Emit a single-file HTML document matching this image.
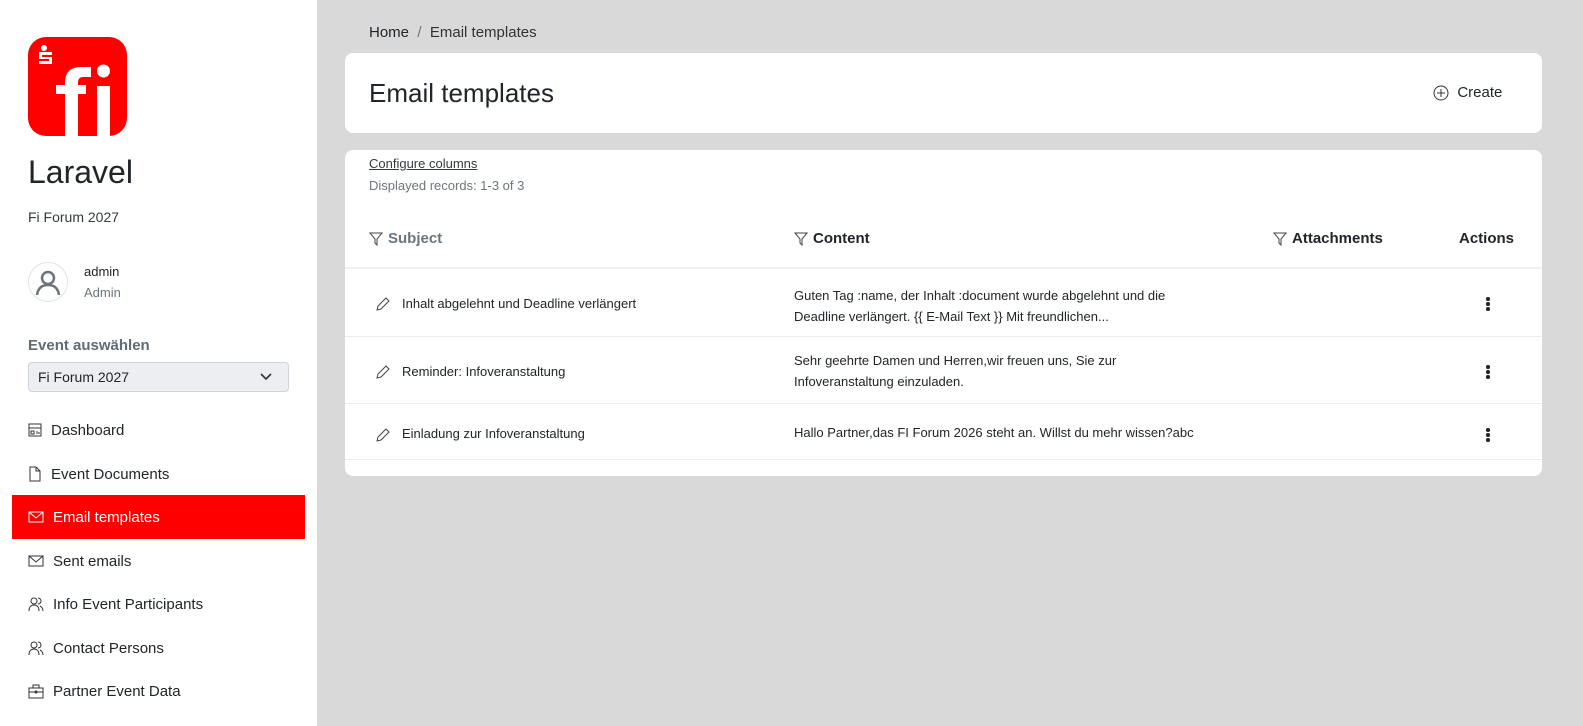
<!DOCTYPE html>
<html><head><meta charset="utf-8"><style>
*{box-sizing:border-box;margin:0;padding:0}
body{width:1583px;height:726px;overflow:hidden;background:#d9d9d9;font-family:"Liberation Sans",sans-serif;color:#212529;position:relative}
.sb{position:absolute;left:0;top:0;width:317px;height:726px;background:#fff}
.abs{position:absolute;white-space:nowrap}
.nav{position:absolute;left:12px;width:293px;height:44px;display:flex;align-items:center;padding-left:16px;font-size:15px;color:#212529}
.nav svg{margin-right:9px}
.nav.act{background:#ff0000;color:#fff}
.card{position:absolute;left:345px;width:1197px;background:#fff;border-radius:8px}
.row{position:absolute;left:0;width:1197px;border-bottom:1px solid #e9ecef;font-size:13px}
.th{position:absolute;top:80px;font-size:15px;font-weight:bold;display:flex;align-items:center;white-space:nowrap}
.th svg{margin-right:5px}
.dots{position:absolute;left:1141px;width:4px}
.dots i{display:block;width:3.5px;height:3.5px;border-radius:50%;background:#212529;margin-bottom:1.5px}
</style></head><body>
<div class="sb">
  <svg class="abs" style="left:28px;top:37px" width="99" height="99" viewBox="0 0 99 99">
    <rect width="99" height="99" rx="18" fill="#ff0000"/>
    <circle cx="16" cy="11" r="3" fill="#fff"/>
    <path d="M11 15h13v3H14v2h10v7H11v-3h10v-2H11z" fill="#fff"/>
    <path d="M37 99V46q0-16 16-16h10v10h-8q-5 0-5 6v53z" fill="#fff"/>
    <rect x="28" y="48" width="30" height="9" fill="#fff"/>
    <rect x="69" y="49" width="13" height="50" fill="#fff"/>
    <circle cx="75.5" cy="34" r="6.5" fill="#fff"/>
  </svg>
  <div class="abs" style="left:28px;top:154px;font-size:32px;font-weight:300;color:#212529">Laravel</div>
  <div class="abs" style="left:28px;top:209px;font-size:14px;color:#343a40">Fi Forum 2027</div>
  <div class="abs" style="left:28px;top:262px;width:40px;height:40px;border:1px solid #dee2e6;border-radius:50%">
    <svg width="38" height="38" viewBox="0 0 38 38"><circle cx="19" cy="15" r="6" fill="none" stroke="#6c757d" stroke-width="2.5"/><path d="M8 32c1-7 5-10 11-10s10 3 11 10" fill="none" stroke="#6c757d" stroke-width="2.5"/></svg>
  </div>
  <div class="abs" style="left:84px;top:264px;font-size:13px">admin</div>
  <div class="abs" style="left:84px;top:285px;font-size:13px;color:#6c757d">Admin</div>
  <div class="abs" style="left:28px;top:337px;font-size:15px;font-weight:bold;color:#5f6b75">Event auswählen</div>
  <div class="abs" style="left:28px;top:362px;width:261px;height:30px;background:#eceef1;border:1px solid #ced4da;border-radius:4px;font-size:14px;padding:6px 9px">Fi Forum 2027
    <svg style="position:absolute;right:16px;top:10px" width="12" height="8" viewBox="0 0 12 8"><path d="M1 1l5 5 5-5" fill="none" stroke="#333" stroke-width="1.6"/></svg></div>
  <div class="nav" style="top:408px"><svg width="14" height="14" viewBox="0 0 14 14" fill="none" stroke="#333"><rect x="1" y="1" width="12" height="12"/><path d="M1 5h12M3 8h3v3H3zM9 8v3M11 9v2"/></svg>Dashboard</div>
  <div class="nav" style="top:452px"><svg width="14" height="16" viewBox="0 0 14 16" fill="none" stroke="#333"><path d="M2 1h6l4 4v10H2z M8 1v4h4"/></svg>Event Documents</div>
  <div class="nav act" style="top:495px"><svg width="16" height="12" viewBox="0 0 16 12" fill="none" stroke="#fff"><rect x="1" y="1" width="14" height="10"/><path d="M1 1l7 6 7-6"/></svg>Email templates</div>
  <div class="nav" style="top:539px"><svg width="16" height="12" viewBox="0 0 16 12" fill="none" stroke="#333"><rect x="1" y="1" width="14" height="10"/><path d="M1 1l7 6 7-6"/></svg>Sent emails</div>
  <div class="nav" style="top:582px"><svg width="16" height="16" viewBox="0 0 16 16" fill="none" stroke="#333"><circle cx="6" cy="5" r="3"/><path d="M1 15c0-4 2-6 5-6s5 2 5 6M10 2a3 3 0 010 6M12 10c2 1 3 3 3 5"/></svg>Info Event Participants</div>
  <div class="nav" style="top:626px"><svg width="16" height="16" viewBox="0 0 16 16" fill="none" stroke="#333"><circle cx="6" cy="5" r="3"/><path d="M1 15c0-4 2-6 5-6s5 2 5 6M10 2a3 3 0 010 6M12 10c2 1 3 3 3 5"/></svg>Contact Persons</div>
  <div class="nav" style="top:669px"><svg width="16" height="15" viewBox="0 0 16 15" fill="none" stroke="#333"><rect x="1" y="4" width="14" height="10"/><path d="M5 4V1h6v3M1 8h14"/><circle cx="8" cy="8" r="1" fill="#333"/></svg>Partner Event Data</div>
</div>
<div class="abs" style="left:369px;top:24px;font-size:15px">Home <span style="color:#6c757d">&nbsp;/&nbsp;</span> <span style="color:#333">Email templates</span></div>
<div class="card" style="top:53px;height:80px">
  <div class="abs" style="left:24px;top:25px;font-size:26px;font-weight:300">Email templates</div>
  <div class="abs" style="left:1088px;top:31px;font-size:15px;display:flex;align-items:center"><svg width="16" height="16" viewBox="0 0 16 16" fill="none" stroke="#333"><circle cx="8" cy="8" r="7"/><path d="M8 4v8M4 8h8"/></svg>&nbsp;&nbsp;Create</div>
</div>
<div class="card" style="top:150px;height:326px">
  <div class="abs" style="left:24px;top:6px;font-size:13px;text-decoration:underline;color:#343a40">Configure columns</div>
  <div class="abs" style="left:24px;top:28px;font-size:13px;color:#6c757d">Displayed records: 1-3 of 3</div>
  <div class="th" style="left:24px;color:#6c757d"><svg width="14" height="14" viewBox="0 0 14 14" fill="none" stroke="#444"><path d="M1 1h12L8 7v6L6 11V7z"/></svg>Subject</div>
  <div class="th" style="left:449px"><svg width="14" height="14" viewBox="0 0 14 14" fill="none" stroke="#444"><path d="M1 1h12L8 7v6L6 11V7z"/></svg>Content</div>
  <div class="th" style="left:928px"><svg width="14" height="14" viewBox="0 0 14 14" fill="none" stroke="#444"><path d="M1 1h12L8 7v6L6 11V7z"/></svg>Attachments</div>
  <div class="th" style="left:1114px">Actions</div>
  <div class="row" style="top:117px;height:2px;background:#eef0f4;border:0"></div>
  <div class="row" style="top:119px;height:68px">
    <svg class="abs" style="left:31px;top:28px" width="14" height="14" viewBox="0 0 14 14" fill="none" stroke="#444"><path d="M1 13l1-4 8-8 3 3-8 8z"/></svg>
    <div class="abs" style="left:57px;top:27px">Inhalt abgelehnt und Deadline verlängert</div>
    <div class="abs" style="left:449px;top:16px;line-height:21px">Guten Tag :name, der Inhalt :document wurde abgelehnt und die<br>Deadline verlängert. {{ E-Mail Text }} Mit freundlichen...</div>
    <div class="dots" style="top:28px"><i></i><i></i><i></i></div>
  </div>
  <div class="row" style="top:187px;height:67px">
    <svg class="abs" style="left:31px;top:28px" width="14" height="14" viewBox="0 0 14 14" fill="none" stroke="#444"><path d="M1 13l1-4 8-8 3 3-8 8z"/></svg>
    <div class="abs" style="left:57px;top:27px">Reminder: Infoveranstaltung</div>
    <div class="abs" style="left:449px;top:13px;line-height:21px">Sehr geehrte Damen und Herren,wir freuen uns, Sie zur<br>Infoveranstaltung einzuladen.</div>
    <div class="dots" style="top:28px"><i></i><i></i><i></i></div>
  </div>
  <div class="row" style="top:254px;height:56px">
    <svg class="abs" style="left:31px;top:24px" width="14" height="14" viewBox="0 0 14 14" fill="none" stroke="#444"><path d="M1 13l1-4 8-8 3 3-8 8z"/></svg>
    <div class="abs" style="left:57px;top:22px">Einladung zur Infoveranstaltung</div>
    <div class="abs" style="left:449px;top:21px">Hallo Partner,das FI Forum 2026 steht an. Willst du mehr wissen?abc</div>
    <div class="dots" style="top:24px"><i></i><i></i><i></i></div>
  </div>
</div>
</body></html>
